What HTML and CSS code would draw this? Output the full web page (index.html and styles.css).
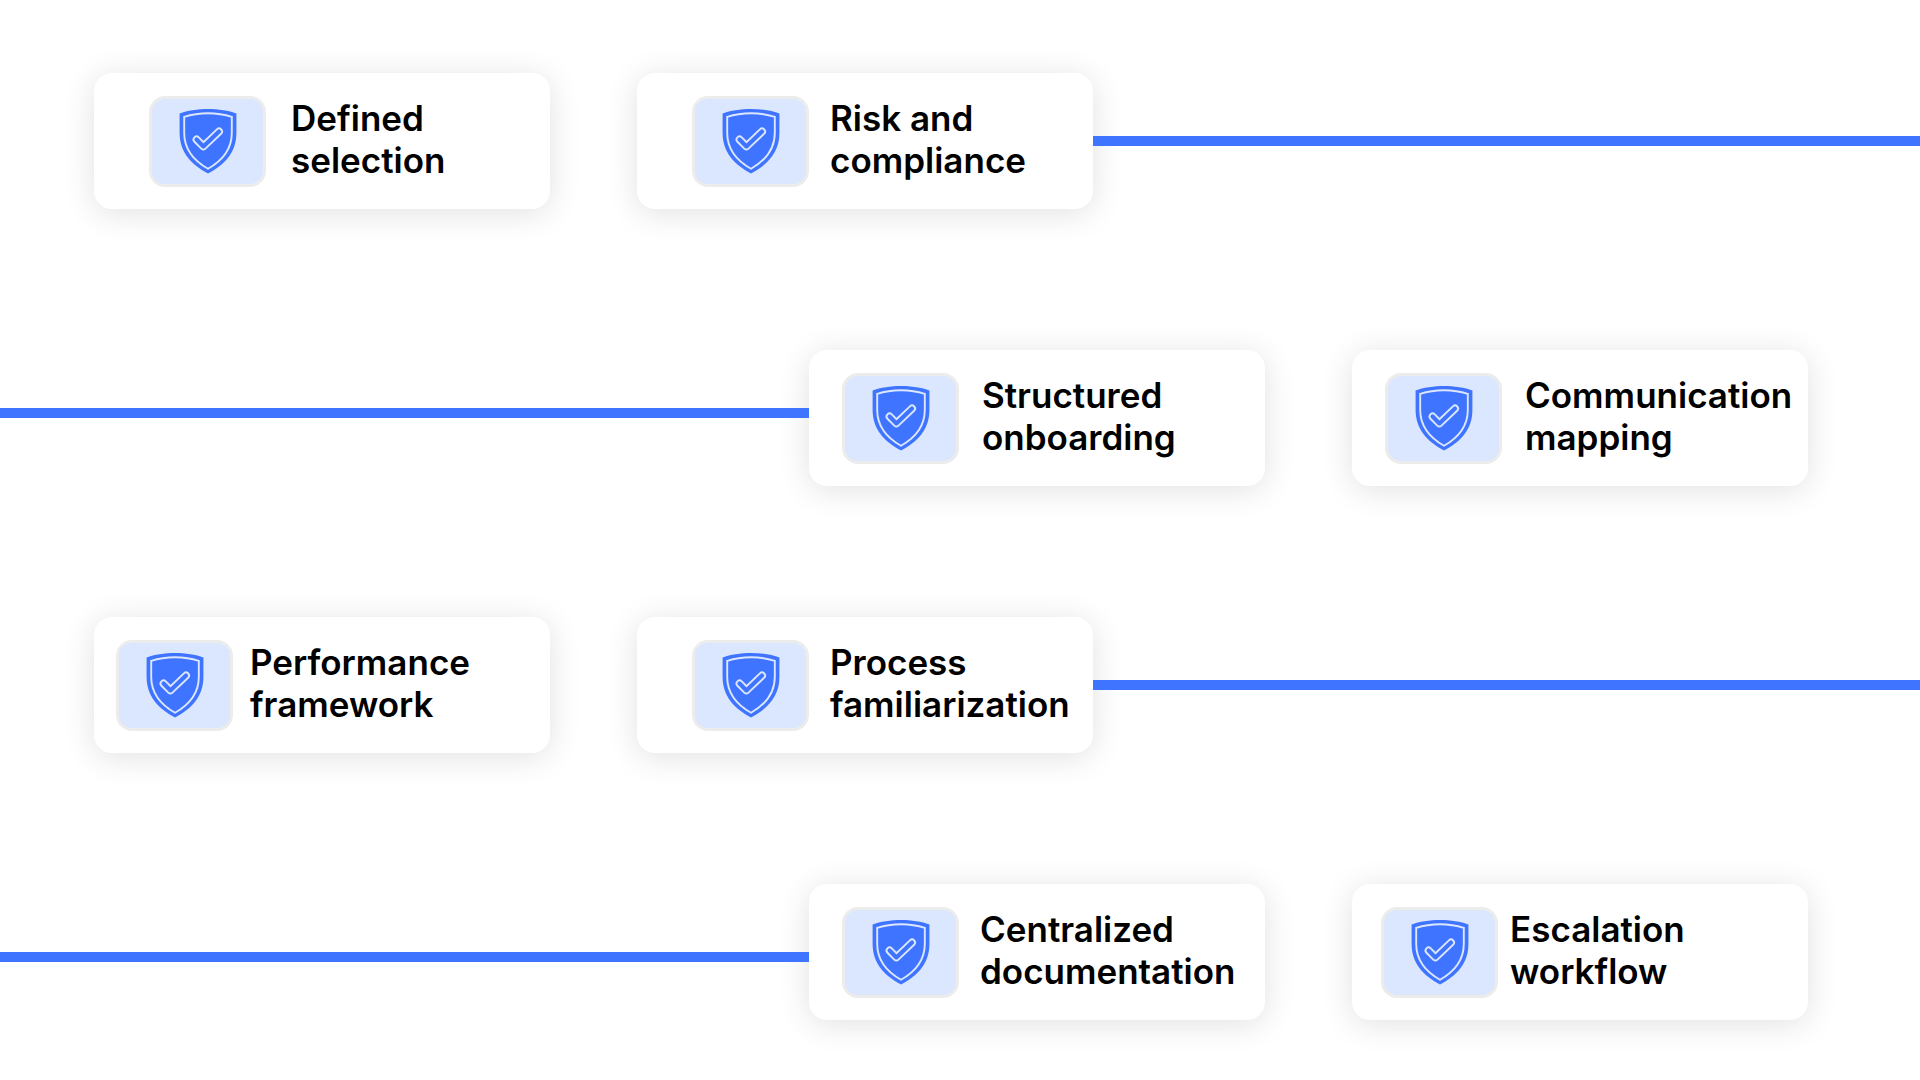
FILE: index.html
```html
<!DOCTYPE html>
<html lang="en">
<head>
<meta charset="utf-8">
<title>Process steps</title>
<link rel="stylesheet" href="styles.css">
</head>
<body>
<svg class="defs" width="0" height="0" aria-hidden="true">
  <symbol id="shield" viewBox="0 0 58 66">
    <path d="M29 1C19 1 8 2.6 .6 5.6V25C.6 44 12 56.5 29 65.5C46 56.5 57.4 44 57.4 25V5.6C50 2.6 39 1 29 1Z" fill="#3e74ff"/>
    <path d="M29 5.2C20.5 5.2 12 6.6 5.2 8.8V25C5.2 41.5 15 52.8 29 60.8C43 52.8 52.8 41.5 52.8 25V8.8C46 6.6 37.5 5.2 29 5.2Z" fill="none" stroke="#dbe6ff" stroke-width="1.9"/>
    <path d="M17.6 31.6L24.4 38.4L40 23.6" fill="none" stroke="#dbe6ff" stroke-width="8" stroke-linecap="round" stroke-linejoin="round"/>
    <path d="M17.6 31.6L24.4 38.4L40 23.6" fill="none" stroke="#3e74ff" stroke-width="4.2" stroke-linecap="round" stroke-linejoin="round"/>
  </symbol>
</svg>
<main class="board">
  <section class="row row-1">
    <article class="card pad-55 gap-25"><div class="badge"><svg class="shield"><use href="#shield"/></svg></div><h2>Defined<br>selection</h2></article>
    <article class="card pad-55 gap-21"><div class="badge"><svg class="shield"><use href="#shield"/></svg></div><h2>Risk and<br>compliance</h2></article>
    <div class="line"></div>
  </section>
  <section class="row row-2">
    <div class="line line-up"></div>
    <article class="card pad-33 gap-23"><div class="badge"><svg class="shield"><use href="#shield"/></svg></div><h2>Structured<br>onboarding</h2></article>
    <article class="card pad-33 gap-23"><div class="badge"><svg class="shield"><use href="#shield"/></svg></div><h2>Communication<br>mapping</h2></article>
  </section>
  <section class="row row-3">
    <article class="card pad-22 gap-17"><div class="badge"><svg class="shield"><use href="#shield"/></svg></div><h2>Performance<br>framework</h2></article>
    <article class="card pad-55 gap-21"><div class="badge"><svg class="shield"><use href="#shield"/></svg></div><h2>Process<br>familiarization</h2></article>
    <div class="line"></div>
  </section>
  <section class="row row-4">
    <div class="line line-down"></div>
    <article class="card pad-33 gap-21"><div class="badge"><svg class="shield"><use href="#shield"/></svg></div><h2>Centralized<br>documentation</h2></article>
    <article class="card pad-29 gap-12"><div class="badge"><svg class="shield"><use href="#shield"/></svg></div><h2>Escalation<br>workflow</h2></article>
  </section>
</main>
</body>
</html>
```
FILE: styles.css
```css
html, body { margin: 0; padding: 0; background: #fff; }
body { width: 1920px; height: 1080px; overflow: hidden; font-family: Inter, "Noto Sans", sans-serif; }
.defs { display: block; height: 0; }
.board { display: flex; flex-direction: column; padding-top: 73px; }
.row { display: flex; align-items: center; height: 136px; }
.row-1 { padding-left: 94px; }
.row-2 { margin-top: 141px; padding-right: 112px; }
.row-3 { margin-top: 131px; padding-left: 94px; }
.row-4 { margin-top: 131px; padding-right: 112px; }
.card {
  display: flex; align-items: center; box-sizing: border-box;
  width: 456px; height: 136px; flex: none; background: #fff; border-radius: 18px;
  box-shadow: 0 4px 32px rgba(0, 0, 0, 0.12);
}
.card + .card { margin-left: 87px; }
.badge {
  display: flex; align-items: center; justify-content: center; flex: none; box-sizing: border-box;
  width: 117px; height: 91px; background: #dbe6ff; border: 3px solid #ececec; border-radius: 16px;
}
.shield { width: 58px; height: 66px; display: block; }
h2 { margin: 0; padding-bottom: 4px; font-size: 35px; letter-spacing: 0; line-height: 42px; font-weight: 600; color: #000; white-space: nowrap; }
.line { flex: 1; height: 10px; background: #3e74ff; }
.line-up { transform: translateY(-5px); }
.line-down { transform: translateY(5px); }
.pad-55 { padding-left: 55px; } .pad-33 { padding-left: 33px; } .pad-22 { padding-left: 22px; } .pad-29 { padding-left: 29px; }
.gap-25 { gap: 25px; } .gap-21 { gap: 21px; } .gap-23 { gap: 23px; } .gap-17 { gap: 17px; } .gap-12 { gap: 12px; }
```
